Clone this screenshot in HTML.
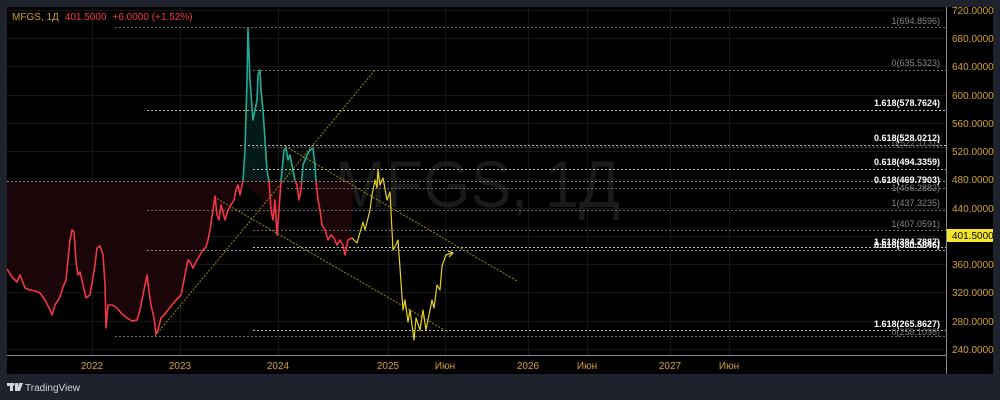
<!DOCTYPE html>
<html><head><meta charset="utf-8"><style>
html,body{margin:0;padding:0;background:#1e222d;width:1000px;height:400px;overflow:hidden}
svg{display:block}
text{font-family:"Liberation Sans","DejaVu Sans",sans-serif}
</style></head><body>
<svg width="1000" height="400" viewBox="0 0 1000 400" xmlns="http://www.w3.org/2000/svg">
<rect x="0" y="0" width="1000" height="400" fill="#1e222d"/>
<rect x="7" y="7" width="986" height="367" fill="#000"/>
<defs>
<clipPath id="below"><rect x="7" y="181" width="939" height="174"/></clipPath>
<clipPath id="above"><rect x="7" y="7" width="939" height="174"/></clipPath>
</defs>
<!-- grid -->
<g stroke="#161616" stroke-width="1">
<line x1="7" y1="10.5" x2="946" y2="10.5"/><line x1="7" y1="38.5" x2="946" y2="38.5"/><line x1="7" y1="66.5" x2="946" y2="66.5"/><line x1="7" y1="95.5" x2="946" y2="95.5"/><line x1="7" y1="123.5" x2="946" y2="123.5"/><line x1="7" y1="151.5" x2="946" y2="151.5"/><line x1="7" y1="179.5" x2="946" y2="179.5"/><line x1="7" y1="208.5" x2="946" y2="208.5"/><line x1="7" y1="236.5" x2="946" y2="236.5"/><line x1="7" y1="264.5" x2="946" y2="264.5"/><line x1="7" y1="292.5" x2="946" y2="292.5"/><line x1="7" y1="321.5" x2="946" y2="321.5"/><line x1="7" y1="349.5" x2="946" y2="349.5"/>
<line x1="92.5" y1="7" x2="92.5" y2="355"/><line x1="180.5" y1="7" x2="180.5" y2="355"/><line x1="278.5" y1="7" x2="278.5" y2="355"/><line x1="388.5" y1="7" x2="388.5" y2="355"/><line x1="445.5" y1="7" x2="445.5" y2="355"/><line x1="528.5" y1="7" x2="528.5" y2="355"/><line x1="587.5" y1="7" x2="587.5" y2="355"/><line x1="670.5" y1="7" x2="670.5" y2="355"/><line x1="729.5" y1="7" x2="729.5" y2="355"/>
</g>
<!-- watermark -->
<text x="335" y="207" font-size="66" fill="#1a1a1a" textLength="285" lengthAdjust="spacingAndGlyphs">MFGS, 1Д</text>
<!-- fills -->
<polygon clip-path="url(#below)" fill="#1a0609" points="7,181 7,269 12,277 17,282 20,275 25,288 30,290 35,291 40,293 45,300 50,310 52,315 55,305 60,297 63,287 66,280 70,240 72,230 74,232 76,262 78,275 80,272 83,285 86,298 90,295 95,265 97,248 100,246 103,255 105,285 106,328 108,305 112,305 117,308 122,314 127,318 132,321 137,320 140,310 144,290 147,275 149,292 151,305 154,318 156,334 158,330 161,318 164,315 168,310 172,305 176,300 181,295 183,285 186,270 188,260 190,262 193,268 196,262 200,255 203,250 206,247 208,240 210,230 213,210 215,196 217,215 219,220 221,205 225,220 228,210 231,205 234,200 236,190 238,185 240,195 243,181 271,210 273,220 275,200 277,235 279,210 281,181 295,181 297,185 299,200 301,190 303,181 316,181 318,200 320,210 322,225 325,230 328,240 331,235 334,238 337,245 340,240 343,245 345,255 348,240 352,238 353,181"/>
<polygon clip-path="url(#above)" fill="#031a16" points="243,181 245,150 247,80 248,28 250,80 253,120 255,110 257,100 258,75 260,70 261,90 263,110 265,140 267,170 269,181 281,181 284,150 286,148 288,160 290,155 293,170 295,181 303,181 303,165 305,160 307,155 310,150 313,148 315,165 316,181"/>
<!-- level lines -->
<g stroke-dasharray="2,2" stroke-width="1" fill="none">
<line x1="115" y1="27.5" x2="946" y2="27.5" stroke="#6a6a6a"/>
<line x1="253" y1="70.5" x2="946" y2="70.5" stroke="#6a6a6a"/>
<line x1="147" y1="110.5" x2="946" y2="110.5" stroke="#bdbdbd"/>
<line x1="240" y1="145.5" x2="946" y2="145.5" stroke="#bdbdbd"/>
<line x1="253" y1="147.5" x2="946" y2="147.5" stroke="#5a5a5a"/>
<line x1="253" y1="169.5" x2="946" y2="169.5" stroke="#bdbdbd"/>
<line x1="7" y1="181.5" x2="946" y2="181.5" stroke="#8a8a8a"/>
<line x1="287" y1="188.5" x2="946" y2="188.5" stroke="#6a6a6a"/>
<line x1="147" y1="210.5" x2="946" y2="210.5" stroke="#6a6a6a"/>
<line x1="253" y1="230.5" x2="946" y2="230.5" stroke="#6a6a6a"/>
<line x1="253" y1="247.5" x2="946" y2="247.5" stroke="#bdbdbd"/>
<line x1="147" y1="250.5" x2="946" y2="250.5" stroke="#8a8a8a"/>
<line x1="253" y1="330.5" x2="946" y2="330.5" stroke="#bdbdbd"/>
<line x1="115" y1="336.5" x2="946" y2="336.5" stroke="#6a6a6a"/>
</g>
<!-- trend lines -->
<g stroke="#9a8a10" stroke-width="1" stroke-dasharray="2,1.5" fill="none">
<line x1="155" y1="336" x2="375" y2="70"/>
<line x1="214" y1="197" x2="448" y2="332"/>
<line x1="285" y1="146" x2="517" y2="281"/>
</g>
<!-- price line -->
<polyline fill="none" stroke="#f23645" stroke-width="1.6" stroke-linejoin="round" clip-path="url(#below)" points="7,269 12,277 17,282 20,275 25,288 30,290 35,291 40,293 45,300 50,310 52,315 55,305 60,297 63,287 66,280 70,240 72,230 74,232 76,262 78,275 80,272 83,285 86,298 90,295 95,265 97,248 100,246 103,255 105,285 106,328 108,305 112,305 117,308 122,314 127,318 132,321 137,320 140,310 144,290 147,275 149,292 151,305 154,318 156,334 158,330 161,318 164,315 168,310 172,305 176,300 181,295 183,285 186,270 188,260 190,262 193,268 196,262 200,255 203,250 206,247 208,240 210,230 213,210 215,196 217,215 219,220 221,205 225,220 228,210 231,205 234,200 236,190 238,185 240,195 243,181 245,150 247,80 248,28 250,80 253,120 255,110 257,100 258,75 260,70 261,90 263,110 265,140 267,170 269,181 271,210 273,220 275,200 277,235 279,210 281,181 284,150 286,148 288,160 290,155 293,170 295,181 297,185 299,200 301,190 303,165 305,160 307,155 310,150 313,148 315,165 316,181 318,200 320,210 322,225 325,230 328,240 331,235 334,238 337,245 340,240 343,245 345,255 348,240 352,238"/>
<polyline fill="none" stroke="#22ab94" stroke-width="1.6" stroke-linejoin="round" clip-path="url(#above)" points="240,195 243,181 245,150 247,80 248,28 250,80 253,120 255,110 257,100 258,75 260,70 261,90 263,110 265,140 267,170 269,181 271,210 277,235 279,210 281,181 284,150 286,148 288,160 290,155 293,170 295,181 297,185 301,190 303,165 305,160 307,155 310,150 313,148 315,165 316,181 318,200"/>
<!-- projection -->
<polyline fill="none" stroke="#e5d320" stroke-width="1.2" stroke-linejoin="round" points="352,238 357,243 363,222 365,230 370,210 372,195 375,180 377,188 378,170 380,185 383,178 387,200 390,192 393,250 396,245 398,240 403,310 405,300 408,322 410,310 414,340 416,318 420,330 423,310 426,330 430,310 432,300 434,308 437,285 440,290 442,266 446,255 452,253"/>
<polyline fill="none" stroke="#e5d320" stroke-width="1.2" points="448,251 453,253 449,257"/>
<!-- level labels -->
<g font-size="9" text-anchor="end">
<text x="940" y="24" fill="#888">1(694.8596)</text>
<text x="940" y="66" fill="#888">0(635.5323)</text>
<text x="940" y="106" fill="#fff" font-weight="bold">1.618(578.7624)</text>
<text x="940" y="146" fill="#777">0(522.1131)</text>
<text x="940" y="141" fill="#fff" font-weight="bold">0.618(528.0212)</text>
<text x="940" y="165" fill="#fff" font-weight="bold">0.618(494.3359)</text>
<text x="940" y="191" fill="#888">1(456.2882)</text>
<text x="940" y="183" fill="#fff" font-weight="bold">0.618(469.7903)</text>
<text x="940" y="206" fill="#888">1(437.3235)</text>
<text x="940" y="227" fill="#888">1(407.0591)</text>
<text x="940" y="245" fill="#fff" font-weight="bold">1.618(384.7887)</text>
<text x="940" y="248" fill="#fff" font-weight="bold">0.618(380.5846)</text>
<text x="940" y="335" fill="#777">0(258.1098)</text>
<text x="940" y="327" fill="#fff" font-weight="bold">1.618(265.8627)</text>
</g>
<!-- axes -->
<line x1="946.5" y1="7" x2="946.5" y2="374" stroke="#8a8a8a"/>
<line x1="7" y1="355.5" x2="946" y2="355.5" stroke="#8a8a8a"/>
<g font-size="10" fill="#d4a22c">
<text x="952" y="14">720.0000</text><text x="952" y="42">680.0000</text><text x="952" y="70">640.0000</text><text x="952" y="99">600.0000</text><text x="952" y="127">560.0000</text><text x="952" y="155">520.0000</text><text x="952" y="183">480.0000</text><text x="952" y="212">440.0000</text><text x="952" y="268">360.0000</text><text x="952" y="296">320.0000</text><text x="952" y="325">280.0000</text><text x="952" y="353">240.0000</text>
</g>
<rect x="947" y="229" width="46" height="13" fill="#f5e62a"/>
<text x="952" y="239" font-size="10" fill="#000">401.5000</text>
<g font-size="10" fill="#d4a22c" text-anchor="middle">
<text x="92" y="369">2022</text><text x="180" y="369">2023</text><text x="278" y="369">2024</text><text x="388" y="369">2025</text><text x="445" y="369">Июн</text><text x="528" y="369">2026</text><text x="587" y="369">Июн</text><text x="670" y="369">2027</text><text x="729" y="369">Июн</text>
</g>
<!-- legend -->
<text x="12" y="20" font-size="10"><tspan fill="#c9a227">MFGS, 1Д</tspan><tspan dx="6" fill="#f23645">401.5000</tspan><tspan dx="6" fill="#f23645">+6.0000 (+1.52%)</tspan></text>
<!-- TV logo -->
<g fill="#d1d4dc">
<rect x="7" y="383" width="7" height="3"/><rect x="10" y="383" width="3" height="8"/>
<polygon points="15,383 18,383 18,391 15,391"/>
<polygon points="19,383 23,383 20,391 17,391"/>
<circle cx="16" cy="384.5" r="1.5"/>
</g>
<text x="25" y="391" font-size="10" fill="#d1d4dc">TradingView</text>
</svg>
</body></html>
